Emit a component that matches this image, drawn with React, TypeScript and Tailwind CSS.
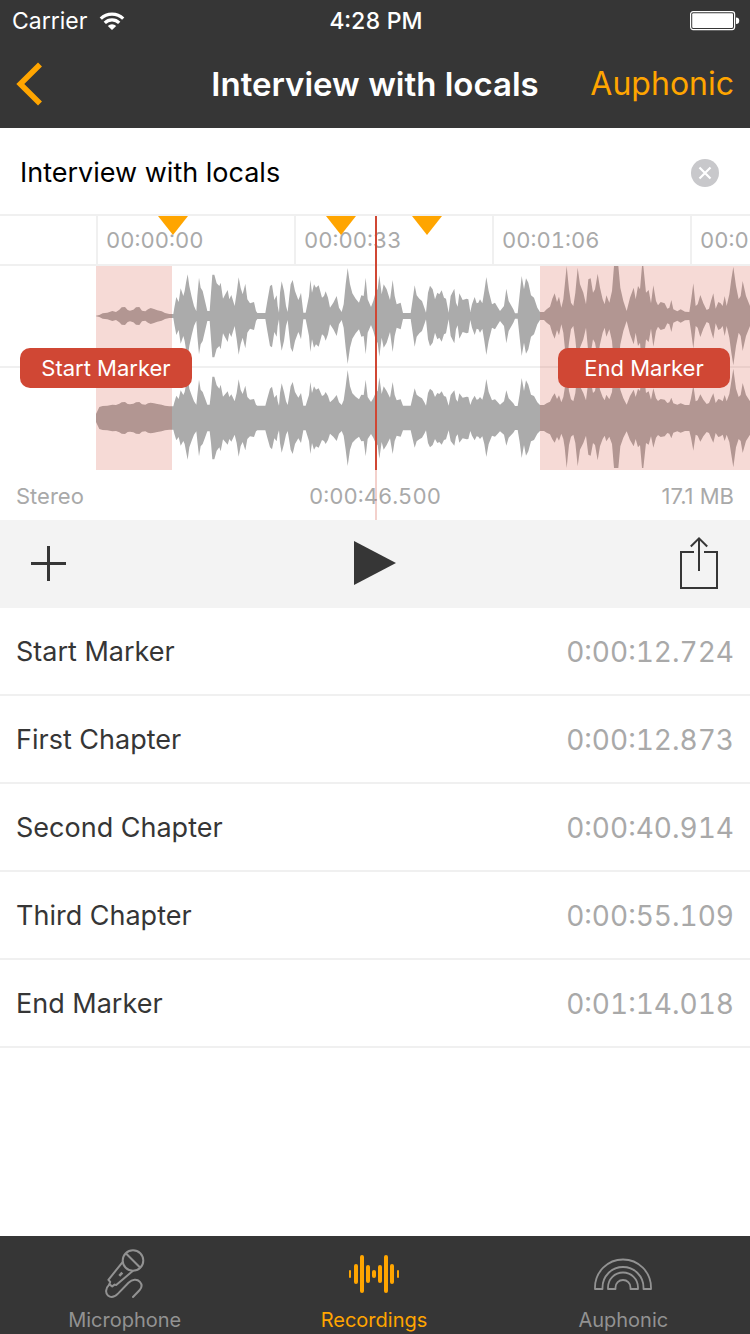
import { useState } from "react";

type Sample = [x: number, amplitude: number];

// Peaks of the recording: position on the timeline and height, in a 2250 x 612 space.
const samples: Sample[] = [
  [288, 1], [298, 3], [308, 8], [322, 10], [337, 15], [348, 12], [358, 19], [365, 26], [375, 27], [383, 18],
  [390, 16], [400, 19], [408, 26], [418, 27], [426, 16], [436, 14], [444, 20], [452, 24], [462, 21], [472, 17],
  [485, 14], [495, 9], [508, 6], [520, 6], [523, 25], [529, 57], [536, 42], [542, 83], [550, 60], [554, 75],
  [558, 100], [563, 125], [568, 90], [575, 58], [582, 30], [589, 14], [592, 60], [597, 115], [602, 85], [608, 75],
  [615, 45], [622, 15], [629, 15], [633, 70], [637, 124], [643, 124], [650, 98], [658, 90], [662, 100], [669, 52],
  [676, 65], [683, 78], [688, 50], [694, 63], [704, 30], [710, 70], [716, 116], [722, 84], [728, 65], [736, 97],
  [742, 50], [750, 38], [762, 42], [768, 15], [772, 9], [796, 9], [802, 45], [810, 90], [816, 94], [823, 48],
  [830, 62], [833, 30], [837, 10], [840, 70], [845, 104], [852, 75], [858, 30], [863, 12], [867, 50], [872, 95],
  [878, 108], [885, 75], [895, 48], [898, 55], [903, 70], [910, 10], [917, 10], [923, 40], [927, 60], [931, 108],
  [936, 70], [942, 95], [948, 85], [956, 92], [966, 55], [972, 60], [977, 74], [984, 55], [990, 25], [1000, 40],
  [1010, 60], [1017, 25], [1025, 12], [1031, 35], [1037, 95], [1043, 144], [1050, 95], [1057, 68], [1067, 52],
  [1077, 40], [1084, 62], [1091, 60], [1097, 115], [1103, 50], [1113, 27], [1120, 45], [1128, 75], [1133, 80],
  [1138, 122], [1145, 65], [1151, 95], [1160, 80], [1170, 48], [1178, 108], [1184, 60], [1190, 35], [1202, 40],
  [1209, 9], [1232, 9], [1238, 50], [1244, 92], [1250, 62], [1258, 52], [1266, 45], [1273, 25], [1278, 10],
  [1284, 70], [1290, 91], [1298, 80], [1305, 50], [1312, 70], [1318, 65], [1325, 77], [1332, 55], [1338, 52],
  [1346, 10], [1352, 60], [1363, 82], [1368, 40], [1373, 28], [1378, 68], [1388, 48], [1400, 52], [1405, 50],
  [1411, 12], [1416, 35], [1424, 57], [1430, 38], [1435, 40], [1440, 50], [1447, 38], [1453, 75], [1459, 117],
  [1466, 75], [1476, 35], [1485, 40], [1492, 28], [1500, 15], [1512, 30], [1519, 82], [1526, 45], [1540, 20],
  [1545, 8], [1553, 8], [1559, 65], [1565, 120], [1572, 80], [1578, 113], [1585, 100], [1593, 62], [1602, 55],
  [1612, 25], [1620, 12], [1632, 12], [1640, 20], [1650, 28], [1657, 52], [1664, 68], [1671, 42], [1677, 58],
  [1684, 25], [1690, 50], [1694, 90], [1700, 150], [1707, 80], [1713, 40], [1720, 30], [1726, 70], [1733, 145],
  [1740, 95], [1750, 70], [1758, 35], [1765, 110], [1772, 113], [1779, 70], [1785, 80], [1793, 127], [1800, 85],
  [1808, 50], [1814, 35], [1819, 62], [1828, 40], [1836, 75], [1842, 150], [1855, 150], [1861, 85], [1870, 45],
  [1880, 15], [1890, 55], [1901, 85], [1907, 50], [1914, 90], [1920, 80], [1926, 150], [1930, 150], [1938, 70],
  [1946, 78], [1953, 38], [1960, 92], [1968, 45], [1974, 32], [1982, 42], [1994, 38], [2002, 22], [2008, 25],
  [2014, 48], [2020, 20], [2032, 14], [2042, 20], [2055, 13], [2068, 12], [2073, 45], [2080, 98], [2087, 30],
  [2093, 35], [2101, 63], [2110, 38], [2120, 18], [2127, 22], [2133, 45], [2140, 68], [2147, 22], [2155, 42],
  [2162, 38], [2168, 30], [2174, 60], [2180, 30], [2188, 65], [2194, 110], [2200, 148], [2208, 90], [2216, 50],
  [2222, 60], [2228, 105], [2238, 60], [2250, 30],
];

const withHum = ([x, a]: Sample): Sample => {
  if (x < 290) return [x, 12];
  return [x, a < 93 ? Math.round(31 + a * 0.63) : a];
};

const envelope = (points: Sample[], center: number) => {
  const top = points.map(([x, a]) => `${x},${center - a}`);
  const bottom = [...points].reverse().map(([x, a]) => `${x},${center + a}`);
  return [...top, ...bottom].join(" ");
};

const markers = [
  { name: "Start Marker", time: "0:00:12.724" },
  { name: "First Chapter", time: "0:00:12.873" },
  { name: "Second Chapter", time: "0:00:40.914" },
  { name: "Third Chapter", time: "0:00:55.109" },
  { name: "End Marker", time: "0:01:14.018" },
];

const ticks = ["00:00:00", "00:00:33", "00:01:06", "00:01:39"];

function StatusBar() {
  return (
    <div className="grid h-10 grid-cols-3 items-center pt-[2px] pr-[10px] pl-3 text-[23px] leading-7 text-white">
      <div className="flex items-center gap-3">
        <span>Carrier</span>
        <svg className="h-[18px] w-[26px]" viewBox="0 0 26 18" fill="none" stroke="#fff" strokeWidth="3.2" aria-label="Wi-Fi">
          <path d="M1.8 6.6a16 16 0 0 1 22.4 0" />
          <path d="M5.8 10.9a10.2 10.2 0 0 1 14.4 0" />
          <path d="M8.8 13.9a6 6 0 0 1 8.4 0L13 18z" fill="#fff" stroke="none" />
        </svg>
      </div>
      <span className="text-center font-medium tabular-nums">4:28 PM</span>
      <svg className="h-5 w-[50px] justify-self-end" viewBox="0 0 50 20" aria-label="Battery full">
        <rect x="0.600" y="0.600" width="44" height="18" rx="2.5" fill="none" stroke="#fff" strokeWidth="1.2" />
        <rect x="2.200" y="2.200" width="40.8" height="14.800" rx="1.2" fill="#fff" />
        <path d="M46 6.400v6.500a3.200 3.200 0 0 0 0-6.500z" fill="#fff" />
      </svg>
    </div>
  );
}

function NavBar() {
  return (
    <div className="grid h-22 grid-cols-[1fr_auto_1fr] items-center px-4">
      <button type="button" aria-label="Back" className="justify-self-start">
        <svg className="h-[44px] w-[28px]" viewBox="0 0 28 44" fill="none" stroke="#ffa500" strokeWidth="5.600">
          <path d="M24 2.500 4.300 22l19.700 19.500" />
        </svg>
      </button>
      <h1 className="text-[33px] leading-10 font-semibold whitespace-nowrap text-white">Interview with locals</h1>
      <button type="button" className="justify-self-end text-[32px] leading-10 text-[#ffa500]">
        Auphonic
      </button>
    </div>
  );
}

function ChapterFlag({ position }: { position: number }) {
  return (
    <svg
      className="absolute top-0 h-[19px] w-[30px] -translate-x-1/2"
      style={{ left: `${position}%` }}
      viewBox="0 0 30 19"
      aria-hidden="true"
    >
      <path d="M0 0h30L15 19z" fill="#ffa500" />
    </svg>
  );
}

function Timeline() {
  return (
    <section aria-label="Timeline" className="relative">
      <div className="flex h-[50px] overflow-hidden border-b-2 border-[#f0f0f0] pl-24">
        {ticks.map((t) => (
          <div
            key={t}
            className="w-[198px] shrink-0 border-l-2 border-[#f0f0f0] pl-2 text-[22px] leading-[48px] text-[#a9a9a9] tabular-nums"
          >
            {t}
          </div>
        ))}
      </div>
      <svg className="block h-[204px] w-full" viewBox="0 0 2250 612" preserveAspectRatio="none" aria-label="Waveform">
        <rect x="0" y="300" width="2250" height="6" fill="#f0f0f0" />
        <polygon points={envelope(samples, 150)} fill="#ababab" />
        <polygon points={envelope(samples.map(withHum), 456)} fill="#ababab" />
        <rect x="288" y="0" width="228" height="612" fill="#d04734" fillOpacity="0.2" />
        <rect x="1620" y="0" width="630" height="612" fill="#d04734" fillOpacity="0.2" />
      </svg>
      <div className="grid h-[50px] grid-cols-3 items-center px-4 pt-[2px] text-[22px] leading-7 text-[#a9a9a9]">
        <span>Stereo</span>
        <span className="text-center tabular-nums">0:00:46.500</span>
        <span className="text-right">17.1 MB</span>
      </div>

      <ChapterFlag position={23.1} />
      <ChapterFlag position={45.5} />
      <ChapterFlag position={56.9} />
      <div className="absolute top-0 bottom-[50px] left-1/2 w-[2px] bg-[#d04734]" />
      <div className="absolute bottom-0 left-1/2 h-[50px] w-[2px] bg-[#d04734]/25" />
      <button
        type="button"
        className="absolute top-[132px] left-5 h-10 w-[172px] rounded-[10px] bg-[#d04734] text-[22px] leading-10 text-white"
      >
        Start Marker
      </button>
      <button
        type="button"
        className="absolute top-[132px] right-5 h-10 w-[172px] rounded-[10px] bg-[#d04734] text-[22px] leading-10 text-white"
      >
        End Marker
      </button>
    </section>
  );
}

function Toolbar() {
  return (
    <div className="grid h-22 grid-cols-3 items-center bg-[#f3f3f3] px-[30px] pb-[2px]">
      <button type="button" aria-label="Add marker" className="justify-self-start">
        <svg className="h-9 w-9" viewBox="0 0 36 36" stroke="#363636" strokeWidth="3">
          <path d="M18.500 1v35M1 18.500h35" />
        </svg>
      </button>
      <button type="button" aria-label="Play" className="justify-self-center">
        <svg className="h-11 w-[42px]" viewBox="0 0 42 44" fill="#363636">
          <path d="M0 0v44l42-22z" />
        </svg>
      </button>
      <button type="button" aria-label="Share" className="justify-self-end">
        <svg className="h-[54px] w-10" viewBox="0 0 40 54" fill="none" stroke="#363636" strokeWidth="2">
          <path d="M14 16H1v36h36V16H24" />
          <path d="M19 35V2M10.800 10.500 19 2.300l8.200 8.200" />
        </svg>
      </button>
    </div>
  );
}

function MicrophoneIcon() {
  return (
    <svg className="h-[50px] w-10" viewBox="0 0 40 50" fill="none" stroke="currentColor" strokeWidth="2" strokeLinejoin="round">
      <circle cx="28" cy="11.500" r="10.300" />
      <path d="M20.800 4.200 35.300 18.800" />
      <path d="M17.800 12.800 3.400 30.800l1.800 2-.8 2.600 2.800 2 2.400-1.800 1.600.4L28 21.800" />
      <path d="m14.300 26.800 3-3.200" strokeWidth="2.600" />
      <path d="M4.400 35.400C.4 39.400.2 44 3 46.600c2.800 2.400 6.600 1.400 10-2L23.500 33.800c3.800-3.600 8.500-4.200 11.400-1 2.600 3 1.800 6-.4 8.400L28 48" strokeLinecap="round" />
    </svg>
  );
}

function RecordingsIcon() {
  return (
    <svg className="h-10 w-[52px]" viewBox="0 0 52 40" fill="currentColor">
      <rect x="1" y="16" width="2" height="8" rx="1" />
      <rect x="6" y="10" width="4" height="20" rx="2" />
      <rect x="12" y="1" width="4" height="38" rx="2" />
      <rect x="18" y="11" width="4" height="18" rx="2" />
      <rect x="24" y="16" width="4" height="8" rx="2" />
      <rect x="30" y="11" width="4" height="18" rx="2" />
      <rect x="36" y="1" width="4" height="38" rx="2" />
      <rect x="42" y="10" width="4" height="20" rx="2" />
      <rect x="49" y="16" width="2" height="8" rx="1" />
    </svg>
  );
}

function RainbowIcon() {
  return (
    <svg className="h-8 w-[58px]" viewBox="0 0 58 32" fill="none" stroke="currentColor" strokeWidth="1.8" strokeLinejoin="round">
      <path d="M1 31V29.500a28 28 0 0 1 56 0V31h-7.500v-1.500a20.500 20.500 0 0 0-41 0V31z" />
      <path d="M14 31v-1.500a15 15 0 0 1 30 0V31h-7.500v-1.500a7.500 7.500 0 0 0-15 0V31z" />
    </svg>
  );
}

const tabs = [
  { label: "Microphone", icon: <MicrophoneIcon /> },
  { label: "Recordings", icon: <RecordingsIcon /> },
  { label: "Auphonic", icon: <RainbowIcon /> },
];

function TabBar() {
  return (
    <nav className="grid h-[98px] grid-cols-3 bg-[#363636] pr-[2px]">
      {tabs.map(({ label, icon }) => (
        <a
          key={label}
          href={`#${label.toLowerCase()}`}
          aria-current={label === "Recordings" ? "page" : undefined}
          className="flex flex-col items-center pt-3 text-[#929292] aria-[current=page]:text-[#ffa500]"
        >
          <span className="flex h-[52px] items-center">{icon}</span>
          <span className="mt-2 text-[20px] leading-6">{label}</span>
        </a>
      ))}
    </nav>
  );
}

export default function App() {
  const [title, setTitle] = useState("Interview with locals");

  return (
    <div className="flex min-h-screen flex-col bg-white font-['Inter','Liberation_Sans',sans-serif]">
      <header className="bg-[#363636]">
        <StatusBar />
        <NavBar />
      </header>
      <main className="grow">
        <div className="flex h-22 items-center border-b-2 border-[#f0f0f0] pt-[3px] pr-[31px] pl-5">
          <input
            aria-label="Recording title"
            value={title}
            onChange={(e) => setTitle(e.target.value)}
            className="min-w-0 grow text-[27px] leading-9 text-black outline-none"
          />
          <button type="button" aria-label="Clear title" onClick={() => setTitle("")}>
            <svg className="h-7 w-7" viewBox="0 0 28 28">
              <circle cx="14" cy="14" r="14" fill="#c8c8cb" />
              <path d="m8.500 8.500 11 11m0-11-11 11" stroke="#fff" strokeWidth="2.200" />
            </svg>
          </button>
        </div>
        <Timeline />
        <Toolbar />
        <ul>
          {markers.map(({ name, time }) => (
            <li
              key={name}
              className="flex h-22 items-center justify-between border-b-2 border-[#f0f0f0] px-4 pt-[2px] leading-9"
            >
              <span className="text-[27px] text-[#363636]">{name}</span>
              <span className="text-[28px] text-[#a9a9a9] tabular-nums">{time}</span>
            </li>
          ))}
        </ul>
      </main>
      <TabBar />
    </div>
  );
}
